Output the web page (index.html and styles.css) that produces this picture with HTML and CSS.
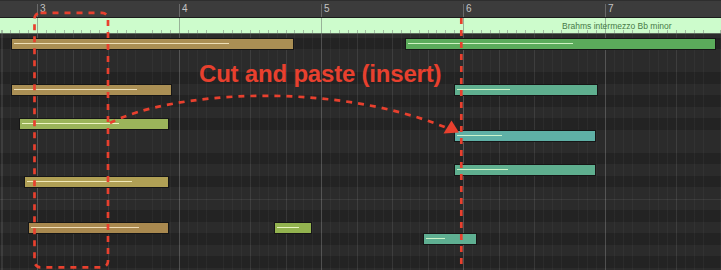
FILE: index.html
```html
<!DOCTYPE html>
<html>
<head>
<meta charset="utf-8">
<link rel="stylesheet" href="styles.css">
</head>
<body>
<div class="stage">
  <div class="ruler">
    <div class="bar lead"></div>
    <div class="bar"><span>3</span></div>
    <div class="bar"><span>4</span></div>
    <div class="bar"><span>5</span></div>
    <div class="bar"><span>6</span></div>
    <div class="bar"><span>7</span></div>
  </div>
  <div class="strip"><span class="region-name">Brahms intermezzo Bb minor</span></div>
  <div class="roll">
    <div class="note tan" style="left:11px;top:4px;width:283px"><i style="width:215px"></i></div>
    <div class="note green" style="left:405px;top:4px;width:311px"><i style="width:165px"></i></div>
    <div class="note tan" style="left:11px;top:50px;width:161px"><i style="width:123px"></i></div>
    <div class="note olive" style="left:19px;top:84px;width:150px"><i style="width:97px"></i></div>
    <div class="note teal" style="left:454px;top:50px;width:144px"><i style="width:53px"></i></div>
    <div class="note cyan" style="left:454px;top:96px;width:142px"><i style="width:45px"></i></div>
    <div class="note teal" style="left:454px;top:130px;width:142px"><i style="width:51px"></i></div>
    <div class="note khaki" style="left:24px;top:142px;width:145px"><i style="width:105px"></i></div>
    <div class="note brown" style="left:28px;top:188px;width:141px"><i style="width:108px"></i></div>
    <div class="note olive2" style="left:274px;top:188px;width:38px"><i style="width:22px"></i></div>
    <div class="note teal2" style="left:423px;top:199px;width:54px"><i style="width:19px"></i></div>
  </div>
  <div class="caption">Cut and paste (insert)</div>
  <svg class="marks" width="721" height="270" viewBox="0 0 721 270">
    <rect class="dash" x="34.5" y="12.8" width="73.5" height="254.5" rx="6" ry="6"/>
    <line class="dash" x1="461.3" y1="18" x2="461.3" y2="272"/>
    <path class="dash" d="M110,123 C170,92 330,80 447,128"/>
    <polygon class="head" points="459,132.5 443.5,133.5 451.5,120.5"/>
  </svg>
</div>
</body>
</html>
```
FILE: styles.css
```css
html, body {
  margin: 0;
  padding: 0;
  background: #222222;
}
.stage {
  position: relative;
  width: 721px;
  height: 270px;
  overflow: hidden;
  font-family: "Liberation Sans", Arial, sans-serif;
}
.ruler {
  display: flex;
  height: 16px;
  background: #3c3c3c;
  border-top: 1px solid #2e2e2e;
  border-bottom: 1px solid #1c1c1c;
}
.bar {
  flex: none;
  width: 141px;
  margin-top: 3px;
  border-left: 1px solid #6a6a6a;
  color: #c4c4c4;
  font-size: 10px;
  line-height: 9px;
}
.bar span {
  padding-left: 2px;
}
.bar.lead {
  width: 37px;
  border-left: none;
}
.strip {
  height: 15px;
  border-bottom: 1px solid #5e6a5e;
  background:
    repeating-linear-gradient(to right, transparent 0 37px, #98b298 37px 38px, transparent 38px 142px),
    repeating-linear-gradient(to right, transparent 0 1.5px, #a2bca2 1.5px 2.5px, transparent 2.5px 8.875px) 0 12px / 100% 3px no-repeat,
    #cdfccc;
  display: flex;
  align-items: center;
  padding-left: 562px;
}
.region-name {
  font-size: 8.5px;
  color: #477a47;
  line-height: 10px;
  margin-top: 1px;
}
.roll {
  position: relative;
  height: 236px;
  background:
    repeating-linear-gradient(to right, transparent 0 37px, rgba(255,255,255,0.12) 37px 38px, transparent 38px 142px),
    repeating-linear-gradient(to right, transparent 0 1.5px, rgba(255,255,255,0.06) 1.5px 2.5px, transparent 2.5px 35.5px),
    repeating-linear-gradient(to right, transparent 0 1.5px, rgba(255,255,255,0.035) 1.5px 2.5px, transparent 2.5px 8.875px),
    linear-gradient(#3a3a3a, #3a3a3a) 0 165px / 100% 1px no-repeat,
    repeating-linear-gradient(to bottom,
      #2b2b2b 0 4px, #232323 4px 15.5px, #2b2b2b 15.5px 38.5px,
      #232323 38.5px 50px, #2b2b2b 50px 61.5px,
      #232323 61.5px 73px, #2b2b2b 73px 84.5px, #232323 84.5px 96px,
      #2b2b2b 96px 119px, #232323 119px 130.5px, #2b2b2b 130.5px 138px);
}
.note {
  position: absolute;
  box-sizing: border-box;
  height: 12px;
  border: 1px solid #161616;
  display: flex;
  align-items: center;
  padding-left: 2px;
}
.note i {
  display: block;
  height: 1px;
  margin-top: -1px;
}
.tan { background: #aa8f54; }
.tan i { background: #eee0b8; }
.brown { background: #a9894f; }
.brown i { background: #efdcb6; }
.khaki { background: #b0a055; }
.khaki i { background: #f0e8b8; }
.olive { background: #9bb45a; }
.olive i { background: #eef5c4; }
.olive2 { background: #93b34f; }
.olive2 i { background: #e8f5c0; }
.green { background: #5bab5b; }
.green i { background: #d0f3c4; }
.teal { background: #5faf8f; }
.teal i { background: #ccf4c8; }
.cyan { background: #5fb0a6; }
.cyan i { background: #ccf4cc; }
.teal2 { background: #5faf92; }
.teal2 i { background: #ccf4c8; }
.caption {
  position: absolute;
  left: 199px;
  top: 60px;
  font-size: 24px;
  font-weight: bold;
  color: #e8402e;
  letter-spacing: -0.2px;
  white-space: nowrap;
}
.marks {
  position: absolute;
  left: 0;
  top: 0;
}
.dash {
  fill: none;
  stroke: #e8402e;
  stroke-width: 2.7;
  stroke-dasharray: 6 6;
}
.head {
  fill: #e8402e;
}
```
